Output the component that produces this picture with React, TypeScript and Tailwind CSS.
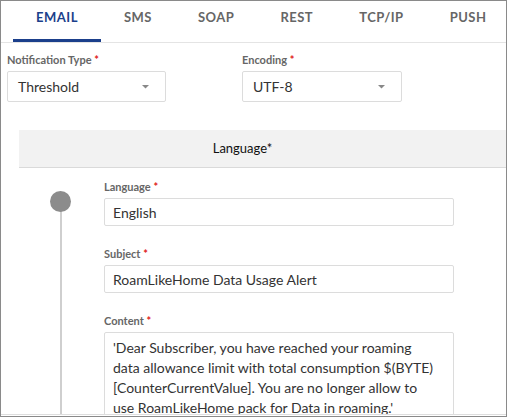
import React from "react";

const tabs = ["EMAIL", "SMS", "SOAP", "REST", "TCP/IP", "PUSH"];

function Label({ text }: { text: string }) {
  return (
    <div className="mb-[4px] text-[11px] font-bold leading-[14px] text-[#666]">
      {text} <span className="text-[#e02020]">*</span>
    </div>
  );
}

function Select({ value, width }: { value: string; width: string }) {
  return (
    <div
      className={`flex h-[31px] items-center justify-between rounded-[2px] border border-[#dcdcdc] bg-white pl-[10px] pr-[16px] text-[14px] text-[#333] ${width}`}
    >
      <span>{value}</span>
      <svg width="7" height="4" viewBox="0 0 7 4">
        <path d="M0 0h7L3.5 3.5z" fill="#888" />
      </svg>
    </div>
  );
}

function Field({ label, value }: { label: string; value: string }) {
  return (
    <div className="mb-[21px]">
      <Label text={label} />
      <div className="flex h-[28px] w-[350px] items-center rounded-[2px] border border-[#dcdcdc] bg-white px-[8px] text-[14px] text-[#333]">
        {value}
      </div>
    </div>
  );
}

export default function App() {
  return (
    <div className="h-[419px] w-[508px] bg-white font-['Lato',sans-serif]">
      <div className="h-[417px] w-[507px] border border-[#8a8a8a] pb-[1px]">
        <div className="h-full overflow-hidden border-b border-[#dedede]">
          <div className="flex border-b border-[#e4e4e4] pl-[12px]">
            {tabs.map((t, i) => (
              <div
                key={t}
                className={`flex h-[41px] shrink-0 items-center justify-center border-b-[3px] px-[23px] pb-[4px] text-[13px] font-bold tracking-[0.5px] ${
                  i === 0 ? "border-[#1b3f8b] text-[#1b3f8b]" : "border-transparent text-[#666]"
                }`}
              >
                {t}
              </div>
            ))}
          </div>

          <div className="flex gap-[76px] pl-[6px] pt-[10px]">
            <div>
              <Label text="Notification Type" />
              <Select value="Threshold" width="w-[159px]" />
            </div>
            <div>
              <Label text="Encoding" />
              <Select value="UTF-8" width="w-[160px]" />
            </div>
          </div>

          <div className="ml-[18px] mt-[28px] flex h-[38px] items-center justify-center border-b border-[#dadada] bg-[#f2f2f2] pr-[40px] text-[13px] text-[#111]">
            Language*
          </div>

          <div className="flex pl-[38px] pt-[12px]">
            <div className="relative mr-[21px] w-[44px] shrink-0">
              <div className="absolute left-[21px] top-[20px] h-[300px] w-[2px] bg-[#cfcfcf]" />
              <div className="absolute left-[11px] top-[11px] h-[21px] w-[21px] rounded-full bg-[#8c8c8c]" />
            </div>
            <div>
              <Field label="Language" value="English" />
              <Field label="Subject" value="RoamLikeHome Data Usage Alert" />
              <div>
                <Label text="Content" />
                <div className="h-[100px] w-[350px] rounded-[2px] border border-[#dcdcdc] bg-white px-[8px] pt-[5px] text-[14px] leading-[20px] text-[#333]">
                  'Dear Subscriber, you have reached your roaming
                  <br />
                  data allowance limit with total consumption $(BYTE)
                  <br />
                  [CounterCurrentValue]. You are no longer allow to
                  <br />
                  use RoamLikeHome pack for Data in roaming.'
                </div>
              </div>
            </div>
          </div>
        </div>
      </div>
    </div>
  );
}
